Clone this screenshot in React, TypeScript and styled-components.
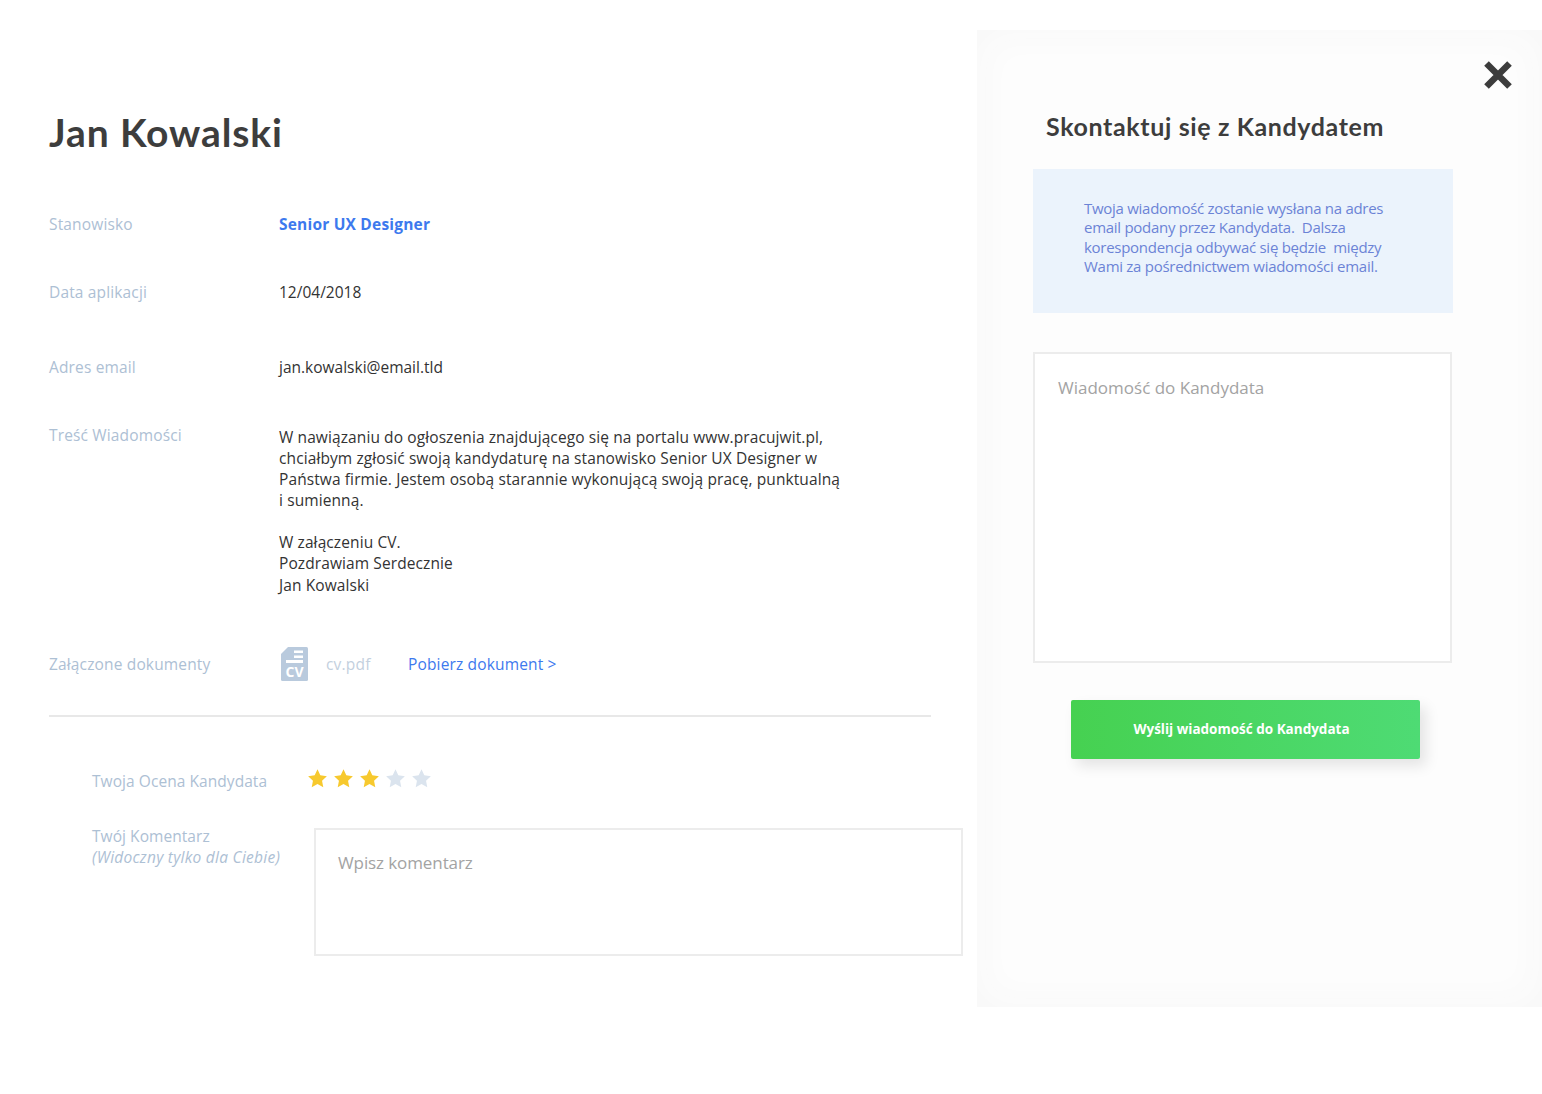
import styled, { createGlobalStyle } from 'styled-components';
import { useState } from 'react';

const BODY_FONT = `"Open Sans", "Noto Sans", sans-serif`;
const HEAD_FONT = `"Lato", "Open Sans", sans-serif`;

const MESSAGE_TOP = [
  'W nawiązaniu do ogłoszenia znajdującego się na portalu www.pracujwit.pl,',
  'chciałbym zgłosić swoją kandydaturę na stanowisko Senior UX Designer w',
  'Państwa firmie. Jestem osobą starannie wykonującą swoją pracę, punktualną',
  'i sumienną.',
];
const MESSAGE_BOTTOM = ['W załączeniu CV.', 'Pozdrawiam Serdecznie', 'Jan Kowalski'];
const NOTICE = [
  'Twoja wiadomość zostanie wysłana na adres',
  'email podany przez Kandydata.  Dalsza',
  'korespondencja odbywać się będzie  między',
  'Wami za pośrednictwem wiadomości email.',
];

export default function App() {
  const [rating, setRating] = useState(3);

  return (
    <Page>
      <GlobalStyle />
      <Details>
        <Name>Jan Kowalski</Name>
        <Row $height={68}>
          <Label>Stanowisko</Label>
          <Position>Senior UX Designer</Position>
        </Row>
        <Row $height={75}>
          <Label>Data aplikacji</Label>
          <Value>12/04/2018</Value>
        </Row>
        <Row $height={68}>
          <Label>Adres email</Label>
          <Value>jan.kowalski@email.tld</Value>
        </Row>
        <Row $height={221}>
          <Label>Treść Wiadomości</Label>
          <Message>
            <Paragraph>
              {MESSAGE_TOP.map((line) => (
                <Line key={line}>{line}</Line>
              ))}
            </Paragraph>
            <Paragraph>
              {MESSAGE_BOTTOM.map((line) => (
                <Line key={line}>{line}</Line>
              ))}
            </Paragraph>
          </Message>
        </Row>
        <Attachment>
          <Label>Załączone dokumenty</Label>
          <AttachmentFile>
            <CvIcon width="27" height="34" viewBox="0 0 27 34">
              <path
                d="M7 0H25.500A1.500 1.500 0 0 1 27 1.500V32.500A1.500 1.500 0 0 1 25.500 34H1.500A1.500 1.500 0 0 1 0 32.500V7Z"
                fill="#b9cadd"
              />
              <path d="M13 3.500H22V6H13ZM13 8.500H22V11H13ZM5 13H22V16H5Z" fill="#fff" />
              <CvMark x="13.500" y="30" textAnchor="middle">CV</CvMark>
            </CvIcon>
            <FileName>cv.pdf</FileName>
            <Download href="#">Pobierz dokument &gt;</Download>
          </AttachmentFile>
        </Attachment>
        <Divider />
        <Review>
          <RatingRow>
            <ReviewLabel>Twoja Ocena Kandydata</ReviewLabel>
            <Stars>
              {[1, 2, 3, 4, 5].map((n) => (
                <Star key={n} $active={n <= rating} viewBox="0 0 24 24" onClick={() => setRating(n)}>
                  <path d="M12 1.500l3.200 6.900 7.500.9-5.500 5.200 1.400 7.500L12 18.400l-6.600 3.600 1.400-7.500L1.300 9.300l7.500-.9z" />
                </Star>
              ))}
            </Stars>
          </RatingRow>
          <CommentRow>
            <ReviewLabel>
              Twój Komentarz
              <Hint>(Widoczny tylko dla Ciebie)</Hint>
            </ReviewLabel>
            <CommentBox placeholder="Wpisz komentarz" />
          </CommentRow>
        </Review>
      </Details>

      <ContactPanel>
        <CloseButton aria-label="Zamknij">
          <svg width="28" height="28" viewBox="0 0 28 28">
            <path d="M2.500 2.500L25.500 25.500M25.500 2.500L2.500 25.500" stroke="#3c3c3c" strokeWidth="6.500" />
          </svg>
        </CloseButton>
        <PanelTitle>Skontaktuj się z Kandydatem</PanelTitle>
        <Notice>
          {NOTICE.map((line) => (
            <Line key={line}>{line}</Line>
          ))}
        </Notice>
        <MessageBox placeholder="Wiadomość do Kandydata" />
        <SendButton>Wyślij wiadomość do Kandydata</SendButton>
      </ContactPanel>
    </Page>
  );
}

const GlobalStyle = createGlobalStyle`
  html, body {
    margin: 0;
    padding: 0;
    background: #fff;
  }
  * {
    box-sizing: border-box;
  }
`;

const Page = styled.div`
  display: flex;
  width: 1542px;
  height: 1094px;
  overflow: hidden;
  padding-top: 30px;
  font-family: ${BODY_FONT};
`;

const Details = styled.section`
  width: 977px;
  flex: none;
  padding: 76px 0 0 49px;
`;

const Name = styled.h1`
  margin: 0 0 53px;
  height: 53px;
  font-family: ${HEAD_FONT};
  font-size: 39px;
  line-height: 53px;
  font-weight: 700;
  letter-spacing: 0.9px;
  color: #3d3d3d;
`;

const Row = styled.div<{ $height: number }>`
  display: grid;
  grid-template-columns: 230px 1fr;
  height: ${(p) => p.$height}px;
  line-height: 24px;
`;

const Label = styled.span`
  font-size: 15.500px;
  letter-spacing: 0.15px;
  color: #adc0d4;
`;

const Value = styled.span`
  font-size: 15.500px;
  color: #333;
`;

const Position = styled(Value)`
  font-weight: 700;
  letter-spacing: 0.2px;
  color: #3d79ee;
`;

const Message = styled.div`
  padding-top: 3.500px;
  font-size: 15.500px;
  line-height: 21.300px;
  letter-spacing: 0.1px;
  color: #333;
`;

const Paragraph = styled.p`
  margin: 0 0 20.500px;
`;

const Line = styled.span`
  display: block;
  white-space: pre;
`;

const Attachment = styled.div`
  display: grid;
  grid-template-columns: 230px 1fr;
  align-items: center;
  height: 40px;
`;

const AttachmentFile = styled.div`
  display: flex;
  align-items: center;
  padding-left: 2px;
`;

const CvIcon = styled.svg`
  flex: none;
  margin-right: 18px;
`;

const CvMark = styled.text`
  font-family: ${BODY_FONT};
  font-size: 14px;
  font-weight: 700;
  fill: #fff;
`;

const FileName = styled.span`
  width: 82px;
  font-size: 15.500px;
  letter-spacing: 0.2px;
  color: #c3d0de;
`;

const Download = styled.a`
  font-size: 15.500px;
  letter-spacing: 0.15px;
  color: #3d79ee;
  text-decoration: none;
`;

const Divider = styled.hr`
  width: 882px;
  height: 2px;
  margin: 31px 0 0;
  border: 0;
  background: #e8e8e8;
`;

const Review = styled.div`
  padding: 51px 0 0 43px;
`;

const RatingRow = styled.div`
  display: flex;
  align-items: center;
  height: 26px;
  margin-bottom: 32px;
`;

const ReviewLabel = styled.div`
  width: 216px;
  flex: none;
  font-size: 15.500px;
  line-height: 21px;
  letter-spacing: 0.06px;
  color: #adc0d4;
`;

const Hint = styled.em`
  display: block;
  font-style: italic;
  letter-spacing: 0.26px;
`;

const Stars = styled.div`
  display: flex;
  gap: 5px;
  margin: -5px 0 0 -1px;
`;

const Star = styled.svg<{ $active: boolean }>`
  width: 21px;
  height: 21px;
  fill: ${(p) => (p.$active ? '#f7c92e' : '#dbe4ee')};
  cursor: pointer;
`;

const CommentRow = styled.div`
  display: flex;
  align-items: flex-start;
`;

const CommentBox = styled.textarea`
  width: 649px;
  height: 128px;
  flex: none;
  margin: 2px 0 0 6px;
  padding: 21px 22px;
  resize: none;
  outline: none;
  border: 2px solid #ececec;
  background: #fff;
  font-family: ${BODY_FONT};
  font-size: 17px;
  letter-spacing: -0.1px;
  &::placeholder {
    color: #a3a3a3;
    opacity: 1;
  }
`;

const ContactPanel = styled.aside`
  position: relative;
  width: 565px;
  height: 977px;
  flex: none;
  padding: 78px 0 0 56px;
  background: #fdfdfd;
  box-shadow: inset 0 0 40px #f7f7f7;
`;

const CloseButton = styled.button`
  position: absolute;
  top: 31px;
  right: 30px;
  width: 28px;
  height: 28px;
  padding: 0;
  border: 0;
  background: none;
  cursor: pointer;
  svg {
    display: block;
  }
`;

const PanelTitle = styled.h2`
  margin: 0 0 25px 13px;
  height: 36px;
  font-family: ${HEAD_FONT};
  font-size: 25px;
  line-height: 36px;
  font-weight: 700;
  letter-spacing: 0.63px;
  color: #3d3d3d;
`;

const Notice = styled.div`
  width: 420px;
  height: 144px;
  padding: 30px 0 0 51px;
  background: #ebf3fc;
  font-size: 15px;
  line-height: 19.400px;
  letter-spacing: -0.28px;
  color: #6b83d6;
`;

const MessageBox = styled.textarea`
  display: block;
  width: 419px;
  height: 311px;
  margin-top: 39px;
  padding: 22px 23px;
  resize: none;
  outline: none;
  border: 2px solid #ececec;
  background: #fff;
  font-family: ${BODY_FONT};
  font-size: 17px;
  letter-spacing: 0;
  &::placeholder {
    color: #a3a3a3;
    opacity: 1;
  }
`;

const SendButton = styled.button`
  display: block;
  width: 349px;
  height: 59px;
  margin: 37px 0 0 38px;
  padding: 0 8px 1px 0;
  border: 0;
  border-radius: 2px;
  background: linear-gradient(90deg, #46d151, #4edb74);
  box-shadow: 6px 7px 14px rgba(0, 0, 0, 0.1);
  font-family: ${BODY_FONT};
  font-size: 13.500px;
  font-weight: 700;
  color: #fff;
  cursor: pointer;
`;
